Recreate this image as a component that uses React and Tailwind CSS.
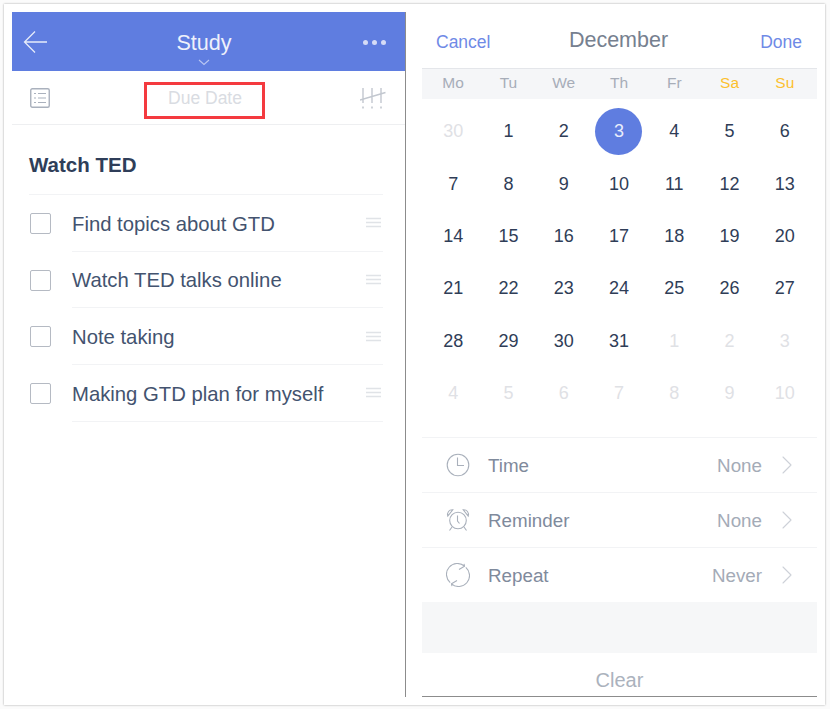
import { ChevronRight } from "lucide-react";

const todos = ["Find topics about GTD", "Watch TED talks online", "Note taking", "Making GTD plan for myself"];
const weekdays = ["Mo", "Tu", "We", "Th", "Fr", "Sa", "Su"];

// 0 = faded day from a neighbouring month, 1 = normal, 2 = selected
const days = [
  ["30", 0], ["1", 1], ["2", 1], ["3", 2], ["4", 1], ["5", 1], ["6", 1],
  ["7", 1], ["8", 1], ["9", 1], ["10", 1], ["11", 1], ["12", 1], ["13", 1],
  ["14", 1], ["15", 1], ["16", 1], ["17", 1], ["18", 1], ["19", 1], ["20", 1],
  ["21", 1], ["22", 1], ["23", 1], ["24", 1], ["25", 1], ["26", 1], ["27", 1],
  ["28", 1], ["29", 1], ["30", 1], ["31", 1], ["1", 0], ["2", 0], ["3", 0],
  ["4", 0], ["5", 0], ["6", 0], ["7", 0], ["8", 0], ["9", 0], ["10", 0],
];

// ── Icons ────────────────────────────────────────────────
function BackIcon() {
  return (
    <svg width="24" height="24" viewBox="0 0 24 24" fill="none" stroke="#e6ebfa" strokeWidth="1.3">
      <path d="M24 12H1.5M12 1.5L1.5 12L12 22.5" />
    </svg>
  );
}

function NotesIcon() {
  return (
    <svg width="20" height="20" viewBox="0 0 20 20" fill="none" stroke="#aab1bd">
      <rect x="0.75" y="0.75" width="18.5" height="18.5" rx="1.5" strokeWidth="1.4" />
      <path d="M4 5.5h2M8 5.5h8M4 10h2M8 10h8M4 14.5h2M8 14.5h8" strokeWidth="1.2" />
    </svg>
  );
}

function TallyIcon() {
  return (
    <svg width="26" height="22" viewBox="0 0 26 22" fill="none" stroke="#c2c7cf" strokeWidth="1.4">
      <path d="M3 1v15M12 1v15M21 1v15M0 13L25.5 5.5" />
      <path d="M3 19.5v2M12 19.5v2M21 19.5v2" strokeWidth="1.6" />
    </svg>
  );
}

function HandleIcon() {
  return (
    <svg width="15" height="11" viewBox="0 0 15 11" fill="none" stroke="#e0e3e7" strokeWidth="1.4">
      <path d="M0 1.5h15M0 5.5h15M0 9.5h15" />
    </svg>
  );
}

function ClockIcon() {
  return (
    <svg width="24" height="24" viewBox="0 0 24 24" fill="none" stroke="#a9b0bb" strokeWidth="1.1">
      <circle cx="12" cy="12" r="10.8" />
      <path d="M11.5 4.5V12.5H18" />
    </svg>
  );
}

function AlarmIcon() {
  return (
    <svg width="24" height="24" viewBox="0 0 24 24" fill="none" stroke="#a9b0bb" strokeWidth="1.1">
      <circle cx="12" cy="12.5" r="8.3" />
      <path d="M11.5 7.5V13l2 2.5" />
      <path d="M1.8 8C0.8 4.5 3 1.5 6.8 1.8zM22.2 8C23.2 4.5 21 1.5 17.2 1.8z" />
      <path d="M6 19l-2.5 3.5M18 19l2.5 3.5" />
    </svg>
  );
}

function RepeatIcon() {
  return (
    <svg width="24" height="24" viewBox="0 0 24 24" fill="none" stroke="#a9b0bb" strokeWidth="1.1">
      <path d="M4.2 19.6A10.8 10.8 0 0 1 18.5 3.2" />
      <path d="M19.8 4.4A10.8 10.8 0 0 1 5.5 20.8" />
      <path d="M13 6.5L18.5 3.2L18 0.8M11 17.5L5.5 20.8L6 23.2" />
    </svg>
  );
}

// ── Left screen ──────────────────────────────────────────
function TaskList() {
  return (
    <div className="w-[394px] border-r border-[#8c8c8c] flex flex-col">
      <div className="relative h-[59px] bg-[#5f7de0] flex items-center justify-between pl-[11px] pr-[19px] text-white">
        <BackIcon />
        <span className="text-[21.6px] leading-none mt-[3px] ml-[-2px] text-[#eef1fb]">Study</span>
        <div className="flex gap-[4px] mt-[1px]">
          <span className="w-[5px] h-[5px] rounded-full bg-[#d5dcf6]" />
          <span className="w-[5px] h-[5px] rounded-full bg-[#d5dcf6]" />
          <span className="w-[5px] h-[5px] rounded-full bg-[#d5dcf6]" />
        </div>
        <svg className="absolute left-[186px] bottom-[5px]" width="12" height="7" viewBox="0 0 12 7" fill="none" stroke="#b9c6f2" strokeWidth="1.1">
          <path d="M1 1l5 4.5L11 1" />
        </svg>
      </div>

      <div className="h-[54px] border-b border-[#eeeff1] flex items-center justify-between pl-[18px] pr-[19px]">
        <NotesIcon />
        <div className="w-[121px] h-[37px] mt-[6px] ml-[-2px] pb-[5px] pl-[2px] border-[3px] border-[#f43a3f] flex items-center justify-center text-[17.5px] text-[#d9dce2]">
          Due Date
        </div>
        <TallyIcon />
      </div>

      <div className="pl-[17px] pr-[22px]">
        <div className="h-[70px] border-b border-[#f2f3f5] flex items-center pt-[11px] text-[20.5px] font-bold text-[#2f3e59]">
          Watch TED
        </div>
        {todos.map((todo) => (
          <div key={todo} className="h-[56.7px] flex items-center">
            <span className="w-[21px] h-[21px] ml-[1px] border-[1.5px] border-[#b5bac3] rounded-[2px] shrink-0" />
            <div className="ml-[21px] h-full flex-1 border-b border-[#f2f3f5] flex items-center justify-between pr-[2px]">
              <span className="text-[20.3px] text-[#43536f] mt-[2px]">{todo}</span>
              <HandleIcon />
            </div>
          </div>
        ))}
      </div>
    </div>
  );
}

// ── Right screen ─────────────────────────────────────────
function SettingRow({ icon, label, value }) {
  return (
    <div className="h-[55px] border-b border-[#f2f3f5] flex items-center pl-[24px] pr-[14px] text-[18.8px]">
      {icon}
      <span className="ml-[18px] mt-[3px] text-[#7f8a9c]">{label}</span>
      <span className="ml-auto mt-[3px] text-[#a4abb7]">{value}</span>
      <ChevronRight className="ml-[9px] w-[32px] h-[32px] text-[#cdd1d8]" strokeWidth={0.8} />
    </div>
  );
}

function DatePicker() {
  return (
    <div className="w-[395px] ml-[16px] h-[685px] flex flex-col border-b border-[#8c8c8c]">
      <div className="h-[56px] grid grid-cols-3 items-center pl-[14px] pr-[15px] text-[17.5px] text-[#6f8ae6]">
        <span className="mt-[5px]">Cancel</span>
        <span className="text-[21.5px] text-[#76808f] text-center ml-[-1px]">December</span>
        <span className="mt-[5px] text-right">Done</span>
      </div>

      <div className="h-[31px] bg-[#f5f6f8] border-t border-[#e4e6ea] grid grid-cols-7 items-center pl-[3.5px] pr-[4.5px] pb-[2px] text-[15.5px] text-center text-[#a7adb8]">
        {weekdays.map((d) => (
          <span key={d} className={d === "Sa" || d === "Su" ? "text-[#fcc02e]" : ""}>{d}</span>
        ))}
      </div>

      <div className="grid grid-cols-7 auto-rows-[52.4px] pl-[3.5px] pr-[4.5px] pt-[6.5px] h-[339px] border-b border-[#f2f3f5] text-[18px] text-center">
        {days.map(([n, kind], i) => (
          <div key={i} className="flex items-center justify-center">
            {kind === 2 ? (
              <span className="w-[47px] h-[47px] rounded-full bg-[#5f7de0] text-[#e9edfb] flex items-center justify-center">{n}</span>
            ) : (
              <span className={kind === 0 ? "text-[#dfe1e5]" : "text-[#2f3d57]"}>{n}</span>
            )}
          </div>
        ))}
      </div>

      <SettingRow icon={<ClockIcon />} label="Time" value="None" />
      <SettingRow icon={<AlarmIcon />} label="Reminder" value="None" />
      <SettingRow icon={<RepeatIcon />} label="Repeat" value="Never" />

      <div className="h-[51px] mt-[-1px] bg-[#f6f7f8]" />
      <div className="flex-1 flex items-center justify-center pt-[10px] text-[20px] text-[#abb2bd]">Clear</div>
    </div>
  );
}

export default function App() {
  return (
    <div className="w-[830px] h-[709px] bg-[#fbfbfb] p-[4px] font-['Liberation_Sans',sans-serif]">
      <div className="w-[821px] h-[701px] bg-white shadow-[0_0_2px_rgba(0,0,0,0.35)] pl-[8px] pt-[8px] flex items-start">
        <div className="h-[685px] flex">
          <TaskList />
        </div>
        <DatePicker />
      </div>
    </div>
  );
}
